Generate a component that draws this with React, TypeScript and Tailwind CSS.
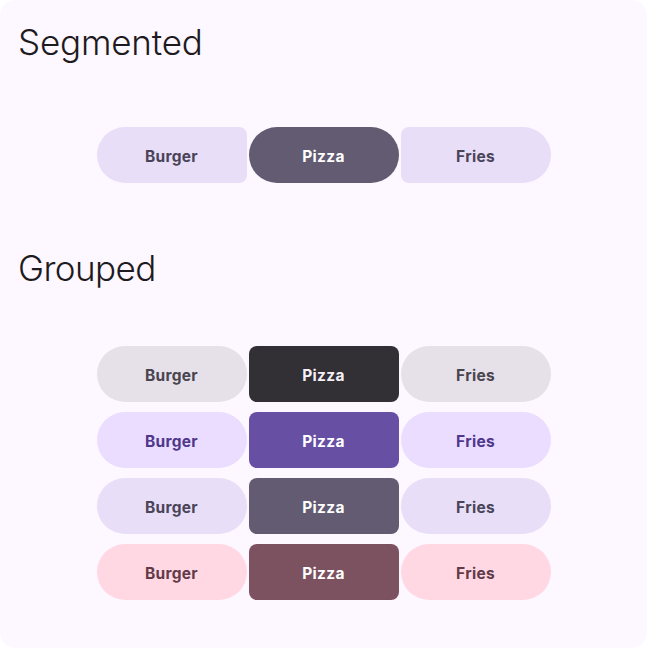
import React from "react";

const font = { fontFamily: "Inter, 'Noto Sans', sans-serif" };

function Btn({ label, cls }: { label: string; cls: string }) {
  return (
    <div className={`w-[150px] h-[56px] flex items-center justify-center pt-[3px] text-[15.5px] font-bold tracking-[0.3px] ${cls}`}>
      {label}
    </div>
  );
}

export default function App() {
  return (
    <div className="w-[647px] h-[648px] bg-white" style={font}>
      <div className="w-full h-full bg-[#fdf7ff] rounded-[16px] pt-[20px] px-[18px]">
        <h2 className="text-[35px] leading-[44px] font-light text-[#1d1b20] tracking-[-0.2px]">Segmented</h2>
        <div className="flex justify-center gap-[2px] mt-[63px]">
          <Btn label="Burger" cls="bg-[#e8def8] text-[#4a4458] rounded-l-[28px] rounded-r-[8px]" />
          <Btn label="Pizza" cls="bg-[#625b71] text-white rounded-[28px]" />
          <Btn label="Fries" cls="bg-[#e8def8] text-[#4a4458] rounded-l-[8px] rounded-r-[28px]" />
        </div>
        <h2 className="text-[35px] leading-[44px] font-light text-[#1d1b20] tracking-[-0.6px] mt-[63px]">Grouped</h2>
        <div className="flex flex-col gap-[10px] mt-[56px]">
          <div className="flex justify-center gap-[2px]">
            <Btn label="Burger" cls="bg-[#e6e0e9] text-[#49454f] rounded-[28px]" />
            <Btn label="Pizza" cls="bg-[#322f35] text-[#f5eff7] rounded-[8px]" />
            <Btn label="Fries" cls="bg-[#e6e0e9] text-[#49454f] rounded-[28px]" />
          </div>
          <div className="flex justify-center gap-[2px]">
            <Btn label="Burger" cls="bg-[#eaddff] text-[#4f378b] rounded-[28px]" />
            <Btn label="Pizza" cls="bg-[#6750a4] text-white rounded-[8px]" />
            <Btn label="Fries" cls="bg-[#eaddff] text-[#4f378b] rounded-[28px]" />
          </div>
          <div className="flex justify-center gap-[2px]">
            <Btn label="Burger" cls="bg-[#e8def8] text-[#4a4458] rounded-[28px]" />
            <Btn label="Pizza" cls="bg-[#625b71] text-white rounded-[8px]" />
            <Btn label="Fries" cls="bg-[#e8def8] text-[#4a4458] rounded-[28px]" />
          </div>
          <div className="flex justify-center gap-[2px]">
            <Btn label="Burger" cls="bg-[#ffd8e4] text-[#633b48] rounded-[28px]" />
            <Btn label="Pizza" cls="bg-[#7d5260] text-white rounded-[8px]" />
            <Btn label="Fries" cls="bg-[#ffd8e4] text-[#633b48] rounded-[28px]" />
          </div>
        </div>
      </div>
    </div>
  );
}
